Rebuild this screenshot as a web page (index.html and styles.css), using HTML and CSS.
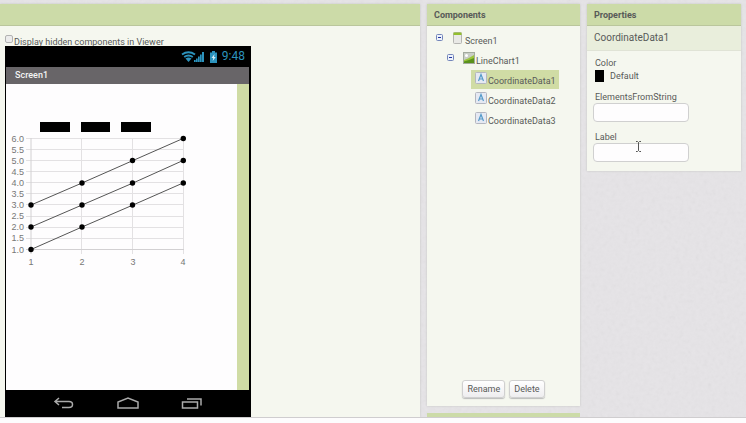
FILE: index.html
```html
<!DOCTYPE html>
<html lang="en">
<head>
<meta charset="utf-8">
<title>App Designer</title>
<link rel="stylesheet" href="styles.css">
</head>
<body>
<svg class="paper" aria-hidden="true">
  <filter id="grain"><feTurbulence type="fractalNoise" baseFrequency="0.25" numOctaves="3"/><feColorMatrix type="saturate" values="0"/></filter>
  <rect width="100%" height="100%" filter="url(#grain)"/>
</svg>
<main class="workspace">
  <section class="panel viewer">
    <div class="panel-head"></div>
    <div class="viewer-body">
      <label class="hidden-toggle"><input type="checkbox"><span>Display hidden components in Viewer</span></label>
      <div class="phone">
        <div class="status">
          <svg class="status-icons" width="38" height="14" viewBox="0 0 38 14">
            <g fill="none" stroke="#2c93bd" stroke-width="2">
              <path d="M2 4.500Q8.500 0 15 4.500"/>
              <path d="M4.200 7Q8.500 4 12.800 7"/>
            </g>
            <path d="M5.500 8.500Q8.500 6.500 11.500 8.500L8.500 12z" fill="#2c93bd"/>
            <g fill="#2c93bd">
              <path d="M14 10h1.700v2H14zM16 8.500h1.700V12H16zM18 6.500h1.700V12H18zM20 4.500h1.700V12H20zM22 2h2v10h-2z"/>
              <path d="M30 2.500h2V1h3v1.500h2V13h-7z"/>
            </g>
            <path d="M34.500 4L31.500 8h1.700l-.5 3 3-4H34z" fill="#d5edf5"/>
          </svg>
          <span class="clock">9:48</span>
        </div>
        <div class="title-bar">Screen1</div>
        <div class="screen">
          <svg class="chart" width="231" height="200" viewBox="6 84 231 200" role="img" aria-label="Line chart">
            <g class="legend">
              <rect x="40" y="122" width="30" height="10"/>
              <rect x="81" y="122" width="29" height="10"/>
              <rect x="121" y="122" width="30" height="10"/>
            </g>
            <path class="grid" d="M26 138.500H184M26 149.500H184M26 160.500H184M26 171.500H184M26 182.500H184M26 193.500H184M26 204.500H184M26 216.500H184M26 227.500H184M26 238.500H184M81.500 138V254M132.500 138V254M183.500 138V254"/>
            <path class="axis" d="M31 138V254M26 249.500H184"/>
            <g class="series">
              <path d="M31 205L82 183 133 160.500 183 138.500"/>
              <path d="M31 227L82 205 133 183 183 160.500"/>
              <path d="M31 249.500L82 227 133 205 183 183"/>
            </g>
            <g class="points">
              <circle cx="31" cy="205" r="2.700"/><circle cx="82" cy="183" r="2.700"/><circle cx="132.500" cy="160.500" r="2.700"/><circle cx="183.300" cy="138.500" r="2.700"/>
              <circle cx="31" cy="227" r="2.700"/><circle cx="82" cy="205" r="2.700"/><circle cx="132.500" cy="183" r="2.700"/><circle cx="183.300" cy="160.500" r="2.700"/>
              <circle cx="31" cy="249.500" r="2.700"/><circle cx="82" cy="227" r="2.700"/><circle cx="132.500" cy="205" r="2.700"/><circle cx="183.300" cy="183" r="2.700"/>
            </g>
            <g class="y-labels">
              <text x="24" y="142">6.0</text><text x="24" y="153">5.5</text><text x="24" y="164">5.0</text><text x="24" y="175">4.5</text><text x="24" y="186">4.0</text><text x="24" y="197">3.5</text><text x="24" y="208">3.0</text><text x="24" y="219">2.5</text><text x="24" y="230">2.0</text><text x="24" y="241">1.5</text><text x="24" y="253">1.0</text>
            </g>
            <g class="x-labels">
              <text x="31" y="265">1</text><text x="82" y="265">2</text><text x="133" y="265">3</text><text x="183" y="265">4</text>
            </g>
          </svg>
        </div>
        <div class="nav">
          <svg width="22" height="14" viewBox="0 0 22 14"><path d="M6 1L2 4.500 6 8M2 4.500H16Q19.500 4.500 19.500 7.500T16 10.500H9"/></svg>
          <svg width="22" height="14" viewBox="0 0 22 14"><path d="M1 11V5L11 1l10 4v6z"/></svg>
          <svg width="22" height="14" viewBox="0 0 22 14"><path d="M1.500 5h15v6h-15zM6 2h14v6.500"/></svg>
        </div>
      </div>
    </div>
  </section>

  <div class="column">
    <section class="panel components">
      <h2 class="panel-head">Components</h2>
      <ul class="tree">
        <li class="node level-1">
          <svg class="toggle" width="7" height="7" viewBox="0 0 7 7"><rect x=".5" y=".5" width="6" height="6" rx="1"/><path d="M2 3.500h3"/></svg>
          <svg class="icon" width="12" height="12" viewBox="0 0 12 12"><rect x="1.500" y=".5" width="8" height="11" rx="1" fill="#e9e9e6" stroke="#b5b5b2"/><path d="M1.500.5h8V3h-8z" fill="#93bf2e"/></svg>
          <span class="name">Screen1</span>
        </li>
        <li class="node level-2">
          <svg class="toggle" width="7" height="7" viewBox="0 0 7 7"><rect x=".5" y=".5" width="6" height="6" rx="1"/><path d="M2 3.500h3"/></svg>
          <svg class="icon" width="12" height="12" viewBox="0 0 12 12"><rect x=".5" y=".5" width="11" height="11" fill="#c9cec6" stroke="#a3ab9e"/><circle cx="3.500" cy="3.500" r="1.500" fill="#fff"/><path d="M1 8L5 6.500 11 3v8H1z" fill="#9cc63c"/><path d="M1 9.500L6 8l5-2v5H1z" fill="#5a921c"/></svg>
          <span class="name">LineChart1</span>
        </li>
        <li class="node level-3 selected">
          <svg class="icon" width="12" height="12" viewBox="0 0 12 12"><rect x=".5" y=".5" width="11" height="11" rx="1" fill="#e5e9f3" stroke="#b4b6bf"/><path d="M3.500 9L6 2.500 8.500 9M4.300 7h3.400" fill="none" stroke="#569bc9" stroke-width="1.200"/></svg>
          <span class="name">CoordinateData1</span>
        </li>
        <li class="node level-3">
          <svg class="icon" width="12" height="12" viewBox="0 0 12 12"><rect x=".5" y=".5" width="11" height="11" rx="1" fill="#e5e9f3" stroke="#b4b6bf"/><path d="M3.500 9L6 2.500 8.500 9M4.300 7h3.400" fill="none" stroke="#569bc9" stroke-width="1.200"/></svg>
          <span class="name">CoordinateData2</span>
        </li>
        <li class="node level-3">
          <svg class="icon" width="12" height="12" viewBox="0 0 12 12"><rect x=".5" y=".5" width="11" height="11" rx="1" fill="#e5e9f3" stroke="#b4b6bf"/><path d="M3.500 9L6 2.500 8.500 9M4.300 7h3.400" fill="none" stroke="#569bc9" stroke-width="1.200"/></svg>
          <span class="name">CoordinateData3</span>
        </li>
      </ul>
      <div class="actions"><button type="button">Rename</button><button type="button">Delete</button></div>
    </section>
    <div class="next-panel"></div>
  </div>

  <section class="panel properties">
    <h2 class="panel-head">Properties</h2>
    <h3 class="subject">CoordinateData1</h3>
    <div class="fields">
      <div class="field">
        <span>Color</span>
        <button class="color" type="button"><i class="swatch"></i>Default</button>
      </div>
      <div class="field">
        <label for="elements">ElementsFromString</label>
        <input id="elements" type="text">
      </div>
      <div class="field">
        <label for="label">Label</label>
        <input id="label" type="text">
        <svg class="cursor" width="7" height="11" viewBox="0 0 7 11"><path d="M1 .5h1.500l1 1 1-1H6M3.500 1.500v8M1 10.500h1.500l1-1 1 1H6"/></svg>
      </div>
    </div>
  </section>
</main>
<footer class="page-foot"></footer>
</body>
</html>
```
FILE: styles.css
```css
* { box-sizing: border-box; }

body {
  margin: 0;
  height: 100vh;
  display: flex;
  flex-direction: column;
  overflow: hidden;
  background: #e6e4e7;
  color: #585a58;
  font: 9px/12px Roboto, "Liberation Sans", sans-serif;
}

h2, h3, ul { margin: 0; padding: 0; font-size: inherit; }

/* Paper grain behind the panels */
.paper {
  position: absolute;
  inset: 0;
  z-index: -1;
  width: 100%;
  height: 100%;
  opacity: .08;
}

.workspace {
  flex: 1;
  min-height: 0;
  display: grid;
  grid-template-columns: 1fr 153px 154px;
  gap: 7px;
  padding: 4px 5px 0 0;
  overflow: hidden;
}

.page-foot {
  height: 6px;
  background: #fdfcfd;
  border-top: 1px solid #cfcdcf;
}

.panel {
  background: #f5f7ef;
  box-shadow: 0 0 2px #c4c4c2;
}

.panel-head {
  height: 22px;
  padding: 0 7px;
  background: #ccdba8;
  border-bottom: 1px solid #bac69c;
  line-height: 23px;
  font-weight: 700;
}

/* Viewer */
.viewer {
  display: flex;
  flex-direction: column;
  min-height: 0;
}

.viewer-body {
  flex: 1;
  display: flex;
  flex-direction: column;
  align-items: flex-start;
  padding: 8px 0 0 5px;
}

.hidden-toggle {
  display: flex;
  align-items: flex-start;
  height: 12px;
}

.hidden-toggle span { padding-top: 2px; }

.hidden-toggle input {
  appearance: none;
  width: 8px;
  height: 8px;
  margin: 1px 1px 0 0;
  border: 1px solid #b2b2b2;
  border-radius: 2px;
  background: #ececec;
}

.phone {
  flex: 1;
  width: 246px;
  display: flex;
  flex-direction: column;
  padding: 0 2px 0 1px;
  background: #000;
}

.status {
  height: 21px;
  display: flex;
  align-items: center;
  justify-content: flex-end;
  gap: 4px;
  padding-right: 4px;
  color: #2c93bd;
}

.clock { font-size: 12px; line-height: 21px; }

.title-bar {
  height: 17px;
  padding-left: 9px;
  background: #686568;
  color: #f4f4f4;
  line-height: 17px;
  font-weight: 500;
}

.screen {
  flex: 1;
  background: #fefdfe;
  border-right: 12px solid #d0dca5;
}

.chart { display: block; }
.grid { stroke: #e3e1e3; fill: none; }
.axis { stroke: #d2d0d2; fill: none; }
.series { stroke: #555; fill: none; }
.y-labels, .x-labels { fill: #777; font: 9px "Liberation Sans", sans-serif; }
.y-labels { text-anchor: end; }
.x-labels { text-anchor: middle; }

.nav {
  height: 27px;
  display: flex;
  align-items: center;
  justify-content: center;
  gap: 42px;
  padding-left: 1px;
}

.nav svg { fill: none; stroke: #aaa; stroke-width: 1.5; }

/* Components */
.column {
  display: flex;
  flex-direction: column;
  gap: 7px;
  min-height: 0;
}

.components {
  flex: 1;
  display: flex;
  flex-direction: column;
}

.next-panel { height: 4px; background: #ccdba8; }

.tree {
  flex: 1;
  padding-top: 4px;
  list-style: none;
}

.node {
  display: flex;
  align-items: flex-start;
  width: fit-content;
  height: 19px;
  margin-bottom: 1px;
  padding: 2px 3px 0 4px;
}

.name { padding-top: 3px; }
.icon { margin-right: 1px; }
.toggle { margin-top: 2px; fill: #edf2fa; stroke: #7486ba; }
.toggle path { stroke: #2335a0; }
.level-1 { margin-left: 5px; }
.level-1 .toggle { margin-right: 9px; }
.level-2 { margin-left: 16px; }
.level-2 .toggle { margin-right: 9px; }
.level-3 { margin-left: 44px; }
.selected { background: #d0dca5; }

.actions {
  display: flex;
  justify-content: center;
  gap: 4px;
  padding-bottom: 8px;
}

.actions button {
  height: 18px;
  padding: 0 4px;
  border: 1px solid #d0d0d0;
  border-radius: 3px;
  background: linear-gradient(#fff, #eeedef);
  box-shadow: 0 1px 1px #bbb;
  color: inherit;
  font: inherit;
}

/* Properties */
.properties { align-self: start; }

.subject {
  height: 25px;
  padding-left: 7px;
  background: #e9eedc;
  border-bottom: 1px solid #e0e3d6;
  font-size: 10px;
  line-height: 24px;
  font-weight: 400;
}

.fields {
  display: flex;
  flex-direction: column;
  gap: 9px;
  padding: 6px 6px 9px;
}

.field {
  position: relative;
  display: flex;
  flex-direction: column;
  align-items: flex-start;
  padding-left: 2px;
}

.field input {
  width: 96px;
  height: 19px;
  margin-left: -2px;
  border: 1px solid #d0d0d0;
  border-radius: 4px;
  background: #fefdfe;
}

.color {
  display: flex;
  align-items: center;
  gap: 6px;
  height: 13px;
  padding: 0;
  border: 0;
  background: none;
  color: inherit;
  font: inherit;
}

.swatch { width: 9px; height: 12px; background: #000; }

.cursor {
  position: absolute;
  left: 42px;
  top: 10px;
  fill: none;
  stroke: #555;
}
```
